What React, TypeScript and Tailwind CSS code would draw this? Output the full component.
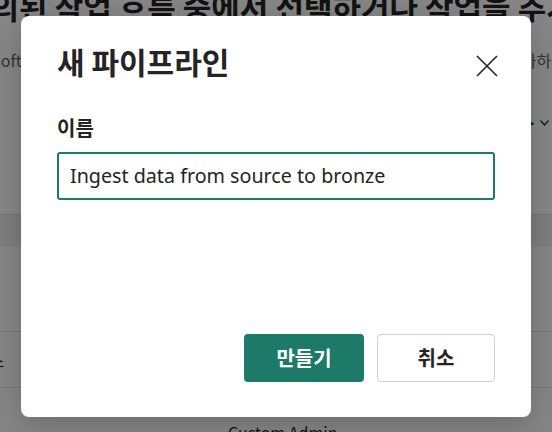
function BackgroundPage() {
  return (
    <div className="flex flex-col text-[#242424]">
      {/* page heading, scrolled so only the bottom shows */}
      <div className="h-[22px] overflow-visible">
        <h1 className="-mt-[14px] -ml-[102px] whitespace-nowrap text-[31px] font-bold leading-[40px]">
          미리 정의된 작업 흐름 중에서 선택하거나 작업을 추가하여 작업 흐름을 만드세요
        </h1>
      </div>

      <div className="mt-[26px] flex h-[24px] items-center justify-between overflow-hidden whitespace-nowrap text-[16px] leading-[24px] text-[#616161]">
        <span className="-ml-[48px]">Microsoft의 작업 흐름</span>
        <span className="-mr-[14px]">작업을 추가하여</span>
      </div>

      <div className="mt-[36px] flex h-[30px] items-center justify-end gap-[6px] pr-[3px] text-[22px] font-semibold">
        <span>작업 추가</span>
        <svg width="9" height="6" viewBox="0 0 9 6" fill="none" stroke="#242424" strokeWidth="1.2">
          <path d="M0.5 0.5 4.5 5 8.5 0.5" />
        </svg>
      </div>

      {/* table */}
      <div className="mt-[76px] border-t border-[#e0e0e0]">
        <div className="h-[32px] bg-[#f0f0f0]" />
        <div className="h-[85px] border-b border-[#e0e0e0]" />
        <div className="flex h-[56px] items-center border-b border-[#e0e0e0] text-[16px]">
          <span className="-ml-[40px] whitespace-nowrap">서비스</span>
        </div>
        <div className="pl-[228px] pt-[32px] text-[16px] leading-[24px]">Custom Admin</div>
      </div>
    </div>
  );
}

export default function App() {
  return (
    <div className="relative h-[432px] w-[552px] overflow-hidden bg-white font-['Noto_Sans_CJK_KR','Noto_Sans',sans-serif]">
      <BackgroundPage />

      {/* dim overlay */}
      <div className="absolute inset-0 bg-black/[0.47]" />

      {/* dialog */}
      <div className="absolute left-[21px] top-[16px] flex h-[401px] w-[510px] flex-col rounded-[8px] bg-white pl-9 pr-[36px] pt-[26px] pb-[35px] shadow-[0_8px_32px_rgba(0,0,0,0.22)]">
        <div className="flex items-start justify-between">
          <h2 className="text-[30px] font-bold leading-[38px] text-[#242424]">새 파이프라인</h2>
          <button className="mr-[-3px] mt-[13px] text-[#242424]" aria-label="닫기">
            <svg width="22" height="22" viewBox="0 0 22 22" fill="none" stroke="currentColor" strokeWidth="1.6">
              <path d="M1 1 21 21M21 1 1 21" />
            </svg>
          </button>
        </div>

        <label className="mt-[34px] text-[20px] font-bold leading-[28px] text-[#242424]">이름</label>
        <div className="mt-[10px] flex h-[48px] items-center rounded-[3px] border-2 border-[#1e7a68] pl-[11px]">
          <span className="font-['Noto_Sans',sans-serif] text-[19.7px] text-[#242424]">
            Ingest data from source to bronze
          </span>
        </div>

        <div className="mt-auto flex justify-end gap-[13px]">
          <button className="h-[48px] w-[120px] rounded-[4px] bg-[#1e7a68] text-[20px] font-bold text-white">
            만들기
          </button>
          <button className="h-[48px] w-[118px] rounded-[4px] border border-[#d1d1d1] bg-white text-[20px] font-bold text-[#242424]">
            취소
          </button>
        </div>
      </div>
    </div>
  );
}
